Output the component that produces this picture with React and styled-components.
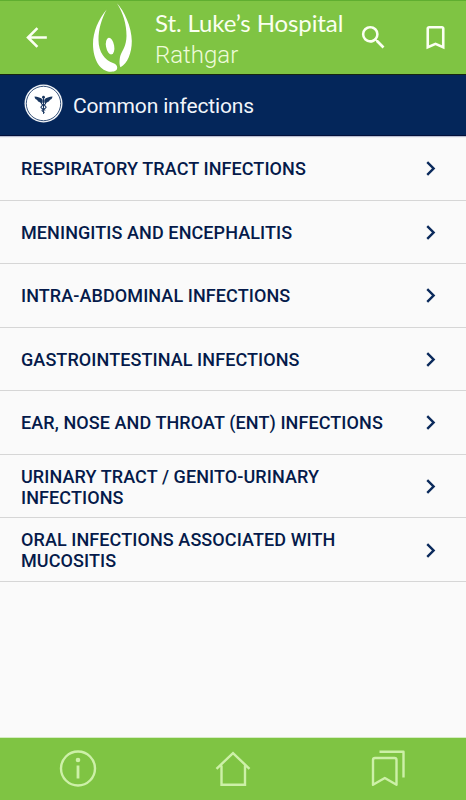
import React from "react";
import styled, { createGlobalStyle } from "styled-components";

const GlobalStyle = createGlobalStyle`
  * { box-sizing: border-box; }
  html, body { margin: 0; padding: 0; }
  body { background: #fafafa; font-family: Roboto, sans-serif; }
`;

const Screen = styled.div`
  display: flex;
  flex-direction: column;
  width: 466px;
  height: 800px;
  overflow: hidden;
  background: #fafafa;
`;

const Header = styled.header`
  display: flex;
  flex: none;
  align-items: flex-start;
  height: 75px;
  padding-left: 21px;
  background: #7fc443;
  border-top: 1px solid #5fae30;
  border-bottom: 1px solid #17260f;
`;

const IconButton = styled.button`
  display: flex;
  flex: none;
  width: 31px;
  height: 31px;
  margin: 21px 0 0 ${(p) => p.$gap || 0}px;
  padding: 0;
  border: 0;
  background: none;
  color: #fbfff2;
  svg { display: block; width: 31px; height: 31px; fill: currentColor; }
`;

const Logo = styled.svg`
  display: block;
  flex: none;
  width: 45px;
  height: 72px;
  margin: 1px 0 0 38px;
  fill: #fff;
`;

const Brand = styled.div`
  display: flex;
  flex-direction: column;
  width: 223px;
  padding: 6px 0 0 20px;
  white-space: nowrap;
  color: #fafff0;
`;

const Hospital = styled.span`
  font: 400 24px/32px Lato, sans-serif;
  letter-spacing: -0.1px;
`;

const Place = styled.span`
  font: 300 24px/32px Roboto, sans-serif;
  color: #eefbd9;
`;

const SectionBar = styled.div`
  display: flex;
  flex: none;
  align-items: center;
  height: 61px;
  padding: 0 0 3px 24px;
  background: #04265a;
  border-bottom: 1px solid #02103a;
  box-shadow: 0 1px 1px #b9bdd0;
`;

const Badge = styled.svg`
  flex: none;
  width: 39px;
  height: 39px;
`;

const SectionTitle = styled.h1`
  margin: 4px 0 0 10px;
  font: 400 21px/28px Roboto, sans-serif;
  letter-spacing: -0.16px;
  color: #f1f5fb;
  white-space: nowrap;
`;

const List = styled.ul`
  flex: 1;
  margin: 0;
  padding: 1px 0 0;
  list-style: none;
`;

const Row = styled.li`
  display: flex;
  align-items: center;
  height: 63.55px;
  padding: 1px 21px 0 21px;
  border-bottom: 1px solid #d6d6d6;
`;

const Label = styled.span`
  flex: 1;
  font: 500 18px/21px Roboto, sans-serif;
  letter-spacing: 0.09px;
  color: #051a4a;
  white-space: pre-line;
`;

const Chevron = styled.svg`
  flex: none;
  width: 29px;
  height: 29px;
  fill: #0b2a5c;
`;

const TabBar = styled.nav`
  display: grid;
  grid-template-columns: repeat(3, 1fr);
  flex: none;
  height: 63px;
  padding-top: 12px;
  background: #7fc443;
  border-top: 1px solid #d5ecc3;
`;

const Tab = styled.button`
  display: flex;
  justify-content: center;
  align-items: flex-start;
  padding: 0;
  border: 0;
  background: none;
  svg {
    display: block;
    width: 40px;
    height: 40px;
    fill: none;
    stroke: #cdf0a8;
    stroke-width: 2.4;
  }
`;

const rows = [
  "RESPIRATORY TRACT INFECTIONS",
  "MENINGITIS AND ENCEPHALITIS",
  "INTRA-ABDOMINAL INFECTIONS",
  "GASTROINTESTINAL INFECTIONS",
  "EAR, NOSE AND THROAT (ENT) INFECTIONS",
  "URINARY TRACT / GENITO-URINARY\nINFECTIONS",
  "ORAL INFECTIONS ASSOCIATED WITH\nMUCOSITIS",
];

export default function App() {
  return (
    <>
      <GlobalStyle />
      <Screen>
        <Header>
          <IconButton aria-label="Back">
            <svg viewBox="0 0 24 24"><path d="M20 11H7.83l5.59-5.59L12 4l-8 8 8 8 1.41-1.41L7.83 13H20v-2z" /></svg>
          </IconButton>
          <Logo viewBox="90 2 45 72">
            <path d="M106.7 9.5C98.5 19 93 32 93 44C93 60 100.500 71.800 111 71.800C115.500 71.800 117.300 70 117.200 67.600C117.100 65.200 115.500 63.900 113 63C105 60.500 98.500 52 98.500 40C98.500 29 101.500 19 106.700 9.500Z" />
            <path d="M117 3.200C124 10.500 131.800 27 131.800 41C131.800 53 127.500 63.500 120.500 67.200C119.200 65 119.200 58.500 120.800 54.500C122.500 50.500 126.300 46 126.500 36C126.600 24 123 13 117 3.200Z" />
            <ellipse cx="110.1" cy="46.1" rx="4.1" ry="8.4" transform="rotate(-10 110.1 46.1)" />
          </Logo>
          <Brand>
            <Hospital>St. Luke’s Hospital</Hospital>
            <Place>Rathgar</Place>
          </Brand>
          <IconButton aria-label="Search">
            <svg viewBox="0 0 24 24"><path d="M15.5 14h-.79l-.28-.27A6.47 6.47 0 0 0 16 9.5 6.5 6.5 0 1 0 9.5 16c1.61 0 3.09-.59 4.23-1.57l.27.28v.79l5 4.99L20.49 19l-4.99-5zm-6 0C7.01 14 5 11.99 5 9.5S7.01 5 9.5 5 14 7.01 14 9.5 11.99 14 9.5 14z" /></svg>
          </IconButton>
          <IconButton aria-label="Bookmark" $gap={31}>
            <svg viewBox="0 0 24 24"><path d="M17 3H7c-1.1 0-2 .9-2 2v16l7-3 7 3V5c0-1.1-.9-2-2-2zm0 15-5-2.18L7 18V5h10v13z" /></svg>
          </IconButton>
        </Header>

        <SectionBar>
          <Badge viewBox="0 0 39 39">
            <circle cx="19.5" cy="19.5" r="19" fill="#f3f5f8" />
            <circle cx="19.5" cy="19.5" r="17.2" fill="#fff" stroke="#3d587f" strokeWidth="1" />
            <g fill="#17355f">
              <circle cx="19.5" cy="13.2" r="1.4" />
              <path d="M18.700 15.700C17.200 13.600 13.500 12.900 10.500 12.600C10.800 14.800 12 15.700 13.200 16C13.500 17.300 14.600 17.900 15.500 17.900C16.200 19 17.600 19.100 18.700 18.800ZM20.300 15.700C21.800 13.600 25.500 12.900 28.500 12.600C28.200 14.800 27 15.700 25.800 16C25.500 17.300 24.400 17.900 23.500 17.900C22.800 19 21.400 19.100 20.300 18.800Z" />
              <path d="M18.9 13H20.1L19.9 30H19.1Z" />
            </g>
            <path d="M17.6 18.5C16 21 23 21.5 22 23.5C21 25.5 17.8 25 18 26.5C18.2 27.5 20.8 27.5 20 29M21.4 18.5C23 21 16 21.5 17 23.5C18 25.5 21.2 25 21 26.5" fill="none" stroke="#17355f" strokeWidth="1.1" />
          </Badge>
          <SectionTitle>Common infections</SectionTitle>
        </SectionBar>

        <List>
          {rows.map((text) => (
            <Row key={text}>
              <Label>{text}</Label>
              <Chevron viewBox="0 0 24 24"><path d="M10 6 8.59 7.41 13.17 12l-4.58 4.59L10 18l6-6z" /></Chevron>
            </Row>
          ))}
        </List>

        <TabBar>
          <Tab aria-label="Information">
            <svg viewBox="0 0 40 40">
              <circle cx="20" cy="18.5" r="17" />
              <circle cx="20" cy="10" r="2.3" fill="#cdf0a8" stroke="none" />
              <path d="M20 15.5v13" strokeWidth="2.8" />
            </svg>
          </Tab>
          <Tab aria-label="Home">
            <svg viewBox="0 0 40 40">
              <path d="M3.5 18.8 20 3.2 36.5 18.8M8.5 15.5v19.2H32V15.5" />
            </svg>
          </Tab>
          <Tab aria-label="Saved bookmarks">
            <svg viewBox="0 0 40 40" strokeLinejoin="round">
              <path d="M5 10a2 2 0 0 1 2-2h19.500a2 2 0 0 1 2 2V34.800L16.800 28 5 34.800ZM11.500 1.700H35.500V27.500" />
            </svg>
          </Tab>
        </TabBar>
      </Screen>
    </>
  );
}
